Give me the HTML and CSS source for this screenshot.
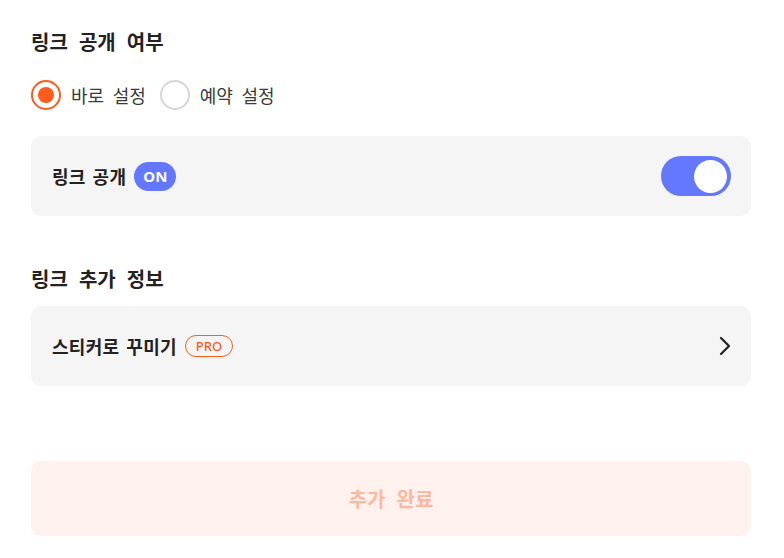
FILE: index.html
```html
<!DOCTYPE html>
<html lang="ko">
<head>
<meta charset="utf-8">
<link rel="stylesheet" href="styles.css">
</head>
<body>
<div class="page">
  <h2 class="title">링크 공개 여부</h2>
  <div class="radios">
    <label class="radio checked"><span class="circle"></span><span class="rlabel">바로 설정</span></label>
    <label class="radio"><span class="circle"></span><span class="rlabel">예약 설정</span></label>
  </div>
  <div class="card">
    <div class="card-left"><span class="card-text">링크 공개</span><span class="badge-on">ON</span></div>
    <div class="toggle"><span class="knob"></span></div>
  </div>
  <h2 class="title title2">링크 추가 정보</h2>
  <div class="card">
    <div class="card-left"><span class="card-text">스티커로 꾸미기</span><span class="badge-pro">PRO</span></div>
    <svg class="chev" width="12" height="20" viewBox="0 0 12 20"><path d="M2 2 L10 10 L2 18" fill="none" stroke="#222" stroke-width="2.2" stroke-linecap="round" stroke-linejoin="round"/></svg>
  </div>
  <button class="submit">추가 완료</button>
</div>
</body>
</html>
```
FILE: styles.css
```css
* { box-sizing: border-box; }
html, body { margin: 0; padding: 0; background: #fff; }
body { font-family: "Noto Sans CJK KR", "Noto Sans", sans-serif; color: #222; }
.page { padding: 26px 33px 0 31px; display: flex; flex-direction: column; }
.title { margin: 0; font-size: 20px; font-weight: 700; line-height: 32px; color: #222; word-spacing: 5.5px; }
.radios { display: flex; gap: 14px; margin-top: 22px; align-items: center; }
.radio { display: flex; align-items: center; gap: 10px; font-size: 18px; color: #3a3a3a; word-spacing: 3.5px; }
.circle { width: 30px; height: 30px; border-radius: 50%; border: 2px solid #d6d6d6; display: flex; align-items: center; justify-content: center; }
.radio.checked .circle { border-color: #ff5b1a; }
.radio.checked .circle::after { content: ""; width: 16px; height: 16px; border-radius: 50%; background: #ff5b1a; }
.card { margin-top: 26px; height: 80px; background: #f5f5f5; border-radius: 10px; display: flex; align-items: center; justify-content: space-between; padding: 0 20px 0 21px; }
.card-left { display: flex; align-items: center; gap: 8px; }
.card-text { font-size: 18px; font-weight: 700; color: #222; letter-spacing: 0.3px; word-spacing: 1.5px; }
.badge-on { background: #6478ff; color: #fff; font-size: 15px; font-weight: 700; border-radius: 15px; padding: 0 9px; height: 29px; line-height: 29px; font-family: "Noto Sans", sans-serif; }
.badge-pro { border: 1px solid #ff5b1a; color: #ff5b1a; font-size: 13px; font-weight: 500; border-radius: 12px; padding: 0 10px; height: 22px; line-height: 20px; font-family: "Noto Sans", sans-serif; }
.toggle { width: 70px; height: 40px; border-radius: 20px; background: #6478ff; display: flex; align-items: center; justify-content: flex-end; padding: 0 4px; }
.knob { width: 33px; height: 33px; border-radius: 50%; background: #fff; }
.title2 { margin-top: 47px; }
.title2 + .card { margin-top: 11px; }
.submit { margin-top: 75px; height: 75px; border: none; border-radius: 10px; background: #fff1ed; color: #ffb89e; font-family: "Noto Sans CJK KR", sans-serif; font-size: 20px; font-weight: 700; word-spacing: 5.5px; }
```
